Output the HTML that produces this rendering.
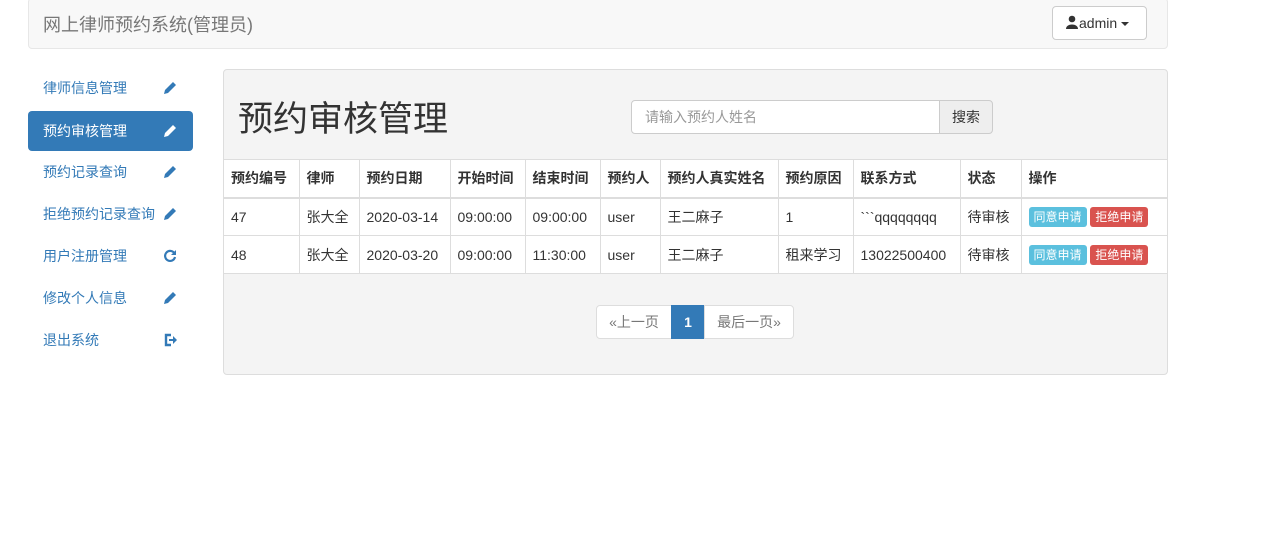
<!DOCTYPE html>
<html><head><meta charset="utf-8"><style>
*{box-sizing:border-box;margin:0;padding:0}
body{width:1273px;height:559px;background:#fff;font-family:"Liberation Sans","Noto Sans CJK SC",sans-serif;font-size:14px;color:#333;position:relative;overflow:hidden}
.a{position:absolute}
.nav{left:28px;top:-2px;width:1140px;height:51px;background:#f8f8f8;border:1px solid #e7e7e7;border-radius:4px}
.title{left:43px;top:11px;font-size:18px;color:#777}
.admin{left:1052px;top:6px;width:95px;height:34px;border:1px solid #ccc;border-radius:4px;background:#fff;font-size:14px;line-height:32px;padding-left:12px}
.side{left:28px;width:165px;height:40px;border-radius:4px;color:#337ab7;line-height:40px;padding-left:15px}
.side.act{background:#337ab7;color:#fff}
.side svg{position:absolute;left:135px;top:13px}
.panel{left:223px;top:69px;width:945px;height:306px;background:#f4f4f4;border:1px solid #ddd;border-radius:4px}
h1{position:absolute;left:238px;top:97px;font-size:35px;font-weight:400;color:#333;line-height:46px}
.inp{left:631px;top:100px;width:309px;height:34px;border:1px solid #ccc;border-radius:4px 0 0 4px;background:#fff;color:#999;line-height:32px;padding-left:13px}
.sbtn{left:939px;top:100px;width:54px;height:34px;border:1px solid #ccc;border-radius:0 4px 4px 0;background:#eee;line-height:32px;text-align:center}
table{position:absolute;left:224px;top:159px;width:943px;border-collapse:collapse;background:#fff}
td,th{border:1px solid #ddd;padding:0 7px;text-align:left;height:38px;white-space:nowrap}
th{border-bottom:2px solid #ddd;font-weight:bold}
tr td:first-child,tr th:first-child{border-left:none}
tr td:last-child,tr th:last-child{border-right:none}
.b{display:inline-block;color:#fff;font-size:12px;padding:0 5px;line-height:20px;border-radius:3px}
.pg{top:305px;height:34px;border:1px solid #ddd;line-height:32px;text-align:center;background:#fff;color:#777}
</style></head><body>
<div class="a nav"></div>
<div class="a title">网上律师预约系统(管理员)</div>
<div class="a admin"><svg width="14" height="14" viewBox="0 0 14 14" style="vertical-align:-1px"><circle cx="7" cy="4" r="3.3" fill="#333"/><path d="M1 14 C1 8 13 8 13 14Z" fill="#333"/></svg>admin <span style="display:inline-block;border-left:4px solid transparent;border-right:4px solid transparent;border-top:4px solid #333;vertical-align:middle"></span></div>

<div class="a side" style="top:68px">律师信息管理<svg width="14" height="14" viewBox="0 0 14 14"><path d="M1 13l1-4 8-8 3 3-8 8z" fill="#337ab7"/></svg></div>
<div class="a side act" style="top:111px">预约审核管理<svg width="14" height="14" viewBox="0 0 14 14"><path d="M1 13l1-4 8-8 3 3-8 8z" fill="#fff"/></svg></div>
<div class="a side" style="top:152px">预约记录查询<svg width="14" height="14" viewBox="0 0 14 14"><path d="M1 13l1-4 8-8 3 3-8 8z" fill="#337ab7"/></svg></div>
<div class="a side" style="top:194px">拒绝预约记录查询<svg width="14" height="14" viewBox="0 0 14 14"><path d="M1 13l1-4 8-8 3 3-8 8z" fill="#337ab7"/></svg></div>
<div class="a side" style="top:236px">用户注册管理<svg width="14" height="14" viewBox="0 0 14 14"><path d="M11.5 4.5A5 5 0 1 0 12 8" stroke="#337ab7" stroke-width="2.2" fill="none"/><path d="M13 1v5h-5z" fill="#337ab7"/></svg></div>
<div class="a side" style="top:278px">修改个人信息<svg width="14" height="14" viewBox="0 0 14 14"><path d="M1 13l1-4 8-8 3 3-8 8z" fill="#337ab7"/></svg></div>
<div class="a side" style="top:320px">退出系统<svg width="14" height="14" viewBox="0 0 14 14"><path d="M8 2H3v10h5" stroke="#337ab7" stroke-width="2.4" fill="none"/><path d="M6 6h4V3l4 4-4 4V8H6z" fill="#337ab7"/></svg></div>

<div class="a panel"></div>
<h1>预约审核管理</h1>
<div class="a inp">请输入预约人姓名</div>
<div class="a sbtn">搜索</div>
<table>
<tr><th style="width:75px">预约编号</th><th style="width:60px">律师</th><th style="width:91px">预约日期</th><th style="width:75px">开始时间</th><th style="width:75px">结束时间</th><th style="width:60px">预约人</th><th style="width:118px">预约人真实姓名</th><th style="width:75px">预约原因</th><th style="width:107px">联系方式</th><th style="width:61px">状态</th><th>操作</th></tr>
<tr><td>47</td><td>张大全</td><td>2020-03-14</td><td>09:00:00</td><td>09:00:00</td><td>user</td><td>王二麻子</td><td>1</td><td>&#96;&#96;&#96;qqqqqqqq</td><td>待审核</td><td><span class="b" style="background:#5bc0de">同意申请</span> <span class="b" style="background:#d9534f">拒绝申请</span></td></tr>
<tr><td>48</td><td>张大全</td><td>2020-03-20</td><td>09:00:00</td><td>11:30:00</td><td>user</td><td>王二麻子</td><td>租来学习</td><td>13022500400</td><td>待审核</td><td><span class="b" style="background:#5bc0de">同意申请</span> <span class="b" style="background:#d9534f">拒绝申请</span></td></tr>
</table>
<div class="a pg" style="left:596px;width:76px;border-radius:4px 0 0 4px">«上一页</div>
<div class="a pg" style="left:671px;width:34px;background:#337ab7;border-color:#337ab7;color:#fff;font-weight:bold">1</div>
<div class="a pg" style="left:704px;width:90px;border-radius:0 4px 4px 0">最后一页»</div>
</body></html>
